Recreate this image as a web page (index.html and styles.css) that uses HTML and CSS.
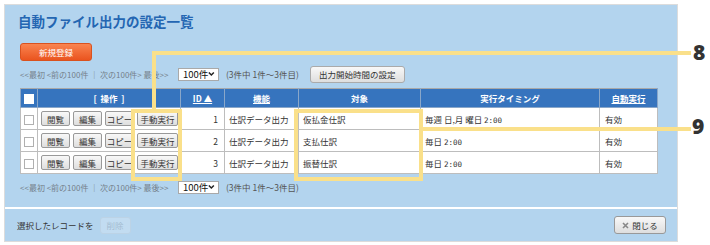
FILE: index.html
```html
<!DOCTYPE html>
<html lang="ja">
<head>
  <meta charset="UTF-8" />
  <title>自動ファイル出力の設定一覧</title>
  <link rel="stylesheet" href="styles.css">
</head>
<body>
  <div class="page">
    <div class="panel">
      <div class="main">
        <h1 class="title">自動ファイル出力の設定一覧</h1>
        <button class="btn-new">新規登録</button>

        <div class="pager">
          <span class="pager-links">&lt;&lt;最初 &lt;前の100件 ｜ 次の100件&gt; 最後&gt;&gt;</span>
          <span class="select"><span>100件</span>
            <svg width="8" height="6" viewBox="0 0 8 6"><path d="M1 1.2 L4 4.2 L7 1.2" fill="none" stroke="#222" stroke-width="1.8"/></svg>
          </span>
          <span class="count">(3件中 1件〜3件目)</span>
          <button class="btn">出力開始時間の設定</button>
        </div>

        <table class="list">
          <colgroup>
            <col style="width:17px"><col style="width:143px"><col style="width:44px"><col style="width:74px">
            <col style="width:122px"><col style="width:179px"><col style="width:58px">
          </colgroup>
          <thead>
            <tr>
              <th><span class="check head"></span></th>
              <th>[&nbsp; 操作 &nbsp;]</th>
              <th><a>ID ▲</a></th>
              <th><a>機能</a></th>
              <th>対象</th>
              <th>実行タイミング</th>
              <th><a>自動実行</a></th>
            </tr>
          </thead>
          <tbody>
            <tr>
              <td><span class="check"></span></td>
              <td class="ops"><button class="btn sm">閲覧</button><button class="btn sm">編集</button><button class="btn sm">コピー</button><button class="btn md">手動実行</button></td>
              <td class="num">1</td>
              <td>仕訳データ出力</td>
              <td>仮払金仕訳</td>
              <td>毎週 日,月 曜日 <span class="mono">2:00</span></td>
              <td>有効</td>
            </tr>
            <tr>
              <td><span class="check"></span></td>
              <td class="ops"><button class="btn sm">閲覧</button><button class="btn sm">編集</button><button class="btn sm">コピー</button><button class="btn md">手動実行</button></td>
              <td class="num">2</td>
              <td>仕訳データ出力</td>
              <td>支払仕訳</td>
              <td>毎日 <span class="mono">2:00</span></td>
              <td>有効</td>
            </tr>
            <tr>
              <td><span class="check"></span></td>
              <td class="ops"><button class="btn sm">閲覧</button><button class="btn sm">編集</button><button class="btn sm">コピー</button><button class="btn md">手動実行</button></td>
              <td class="num">3</td>
              <td>仕訳データ出力</td>
              <td>振替仕訳</td>
              <td>毎日 <span class="mono">2:00</span></td>
              <td>有効</td>
            </tr>
          </tbody>
        </table>

        <div class="pager">
          <span class="pager-links">&lt;&lt;最初 &lt;前の100件 ｜ 次の100件&gt; 最後&gt;&gt;</span>
          <span class="select"><span>100件</span>
            <svg width="8" height="6" viewBox="0 0 8 6"><path d="M1 1.2 L4 4.2 L7 1.2" fill="none" stroke="#222" stroke-width="1.8"/></svg>
          </span>
          <span class="count">(3件中 1件〜3件目)</span>
        </div>
      </div>

      <div class="footer">
        <span class="footer-label">選択したレコードを</span>
        <button class="btn disabled">削除</button>
        <button class="btn close">
          <svg width="7" height="7" viewBox="0 0 7 7"><path d="M1 1 L6 6 M6 1 L1 6" stroke="#888" stroke-width="1.6"/></svg>
          閉じる
        </button>
      </div>
    </div>

    <!-- 注釈 -->
    <div class="mark mark-8"></div>
    <div class="lead lead-8v"></div>
    <div class="lead lead-8h"></div>
    <div class="num-label label-8">8</div>

    <div class="mark mark-9"></div>
    <div class="lead lead-9h"></div>
    <div class="num-label label-9">9</div>
  </div>
</body>
</html>
```

FILE: styles.css
```css
body {
  margin: 0;
  font-family: "Noto Sans CJK JP", "Liberation Sans", sans-serif;
  font-size: 8.5px;
  color: #333;
  background: #fff;
}
.page {
  position: relative;
  width: 710px;
  height: 245px;
}
.panel {
  margin: 4px 0 0 4px;
  width: 672px;
  border: 1px solid #dcdcdc;
  background-color: #b3d4ee;
}
.main {
  padding: 5px 20px 10px 15px;
}
.title {
  margin: 0 0 0 -2px;
  font-size: 13.5px;
  line-height: 20px;
  color: #2466b2;
  font-weight: bold;
  padding-top: 1px;
}
button {
  font-family: inherit;
  cursor: pointer;
}
.btn-new {
  display: block;
  margin-top: 12px;
  width: 72px;
  height: 18px;
  padding: 0;
  border: 1px solid #d9521f;
  border-radius: 3px;
  background: linear-gradient(#f98450, #ea541f);
  color: #fff;
  font-size: 8.5px;
}
.pager {
  display: flex;
  align-items: center;
  height: 20px;
  margin-top: 3px;
  color: #737f8a;
}
.pager-links {
  width: 158px;
  font-size: 8px;
  white-space: nowrap;
}
.select {
  display: inline-flex;
  align-items: center;
  justify-content: space-between;
  box-sizing: border-box;
  width: 41px;
  height: 13px;
  padding: 0 3px 0 4px;
  background: #fff;
  border: 1px solid #a9a9a9;
  color: #111;
  font-size: 9.5px;
  line-height: 11px;
  white-space: nowrap;
}
.count {
  margin-left: 7px;
  width: 84px;
  color: #555;
  white-space: nowrap;
}
.btn {
  height: 17px;
  padding: 0 8px;
  border: 1px solid #aaa;
  border-radius: 3px;
  background: linear-gradient(#f8f8f8, #dedede);
  color: #333;
  font-size: 8.5px;
  white-space: nowrap;
}
.list {
  margin-top: 4px;
  width: 637px;
  border-collapse: collapse;
  table-layout: fixed;
  background: #fff;
  border: 1px solid #a8a8a8;
}
.list th {
  height: 18px;
  padding: 0;
  background-color: #3674be;
  color: #fff;
  font-weight: bold;
  border: 1px solid #8aa7c9;
  border-top-color: #a8a8a8;
}
.list th a {
  text-decoration: underline;
}
.list td {
  height: 21px;
  padding: 0 4px;
  border: 1px solid #bdbdbd;
  white-space: nowrap;
  overflow: hidden;
}
.list td:first-child,
.list th:first-child {
  padding: 0;
  text-align: center;
}
.list td.num {
  text-align: right;
  padding-right: 6px;
}
.list td:last-child {
  padding-left: 5px;
}
.list td.ops {
  padding: 0 0 0 3px;
  font-size: 0;
}
.check {
  display: inline-block;
  vertical-align: middle;
  width: 8px;
  height: 8px;
  border: 1px solid #b0b0b0;
  background: #fff;
}
.check.head {
  border-color: #fff;
}
.btn.sm,
.btn.md {
  height: 15px;
  padding: 0;
  margin-right: 3px;
  font-size: 8.5px;
  border-color: #999;
  border-radius: 2px;
  vertical-align: middle;
}
.btn.sm {
  width: 29px;
}
.btn.md {
  width: 41px;
  margin-right: 0;
}
.mono {
  font-family: "DejaVu Sans Mono", monospace;
  font-size: 7.5px;
}
.footer {
  display: flex;
  align-items: center;
  height: 32px;
  padding: 0 11px 0 12px;
  border-top: 2px solid #fff;
}
.footer-label {
  margin-right: 6px;
  color: #333;
}
.btn.disabled {
  width: 31px;
  height: 17px;
  padding: 0;
  background: #c2dcf1;
  border: 1px solid #bcd3e6;
  color: #a4bcd2;
  cursor: default;
}
.btn.close {
  margin-left: auto;
  display: flex;
  align-items: center;
  justify-content: center;
  gap: 3px;
  width: 52px;
  height: 18px;
  padding: 0;
  border-color: #999;
}

/* 注釈 */
.mark {
  position: absolute;
  box-sizing: border-box;
  border: 4px solid #fae08a;
}
.mark-8 {
  left: 131px;
  top: 105px;
  width: 51px;
  height: 72px;
}
.mark-9 {
  left: 294px;
  top: 105px;
  width: 129px;
  height: 72px;
}
.lead {
  position: absolute;
  background: #fae08a;
}
.lead-8v {
  left: 152px;
  top: 47px;
  width: 4px;
  height: 58px;
}
.lead-8h {
  left: 152px;
  top: 47px;
  width: 539px;
  height: 4px;
}
.lead-9h {
  left: 423px;
  top: 123px;
  width: 268px;
  height: 4px;
}
.num-label {
  position: absolute;
  font-family: "Open Sans", sans-serif;
  font-weight: 800;
  font-size: 21px;
  line-height: 21px;
  color: #333;
}
.label-8 {
  left: 693px;
  top: 38px;
}
.label-9 {
  left: 692px;
  top: 112px;
}
```
